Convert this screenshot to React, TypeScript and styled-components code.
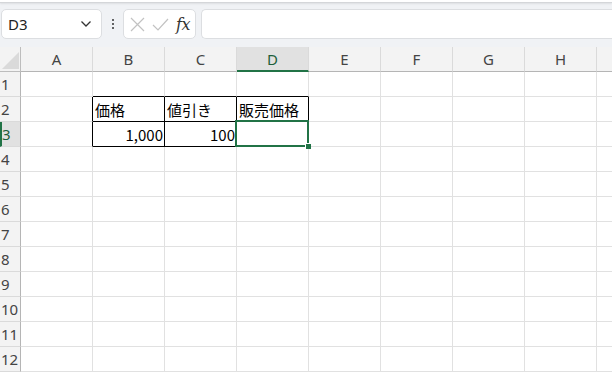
import styled, { createGlobalStyle, css } from "styled-components";

const GlobalStyle = createGlobalStyle`
  html, body {
    margin: 0;
    padding: 0;
    background: #ffffff;
    overflow: hidden;
  }
  body {
    font-family: "Noto Sans", "Noto Sans CJK JP", sans-serif;
  }
`;

const COLUMNS = ["A", "B", "C", "D", "E", "F", "G", "H", "I"];
const ROWS = 12;
const ACTIVE_COL = "D";
const ACTIVE_ROW = 3;

type CellData = { text: string; align?: "left" | "right" };

const DATA: Record<string, CellData> = {
  B2: { text: "価格" },
  C2: { text: "値引き" },
  D2: { text: "販売価格" },
  B3: { text: "1,000", align: "right" },
  C3: { text: "100", align: "right" },
};

// black ruled box B2:D3
const inBox = (c: number, r: number) => c >= 1 && c <= 3 && r >= 2 && r <= 3;

function App() {
  const cells = [];
  for (let r = 1; r <= ROWS; r++) {
    cells.push(
      <RowHeader key={`h${r}`} $active={r === ACTIVE_ROW}>
        {r}
      </RowHeader>
    );
    COLUMNS.forEach((col, c) => {
      const key = `${col}${r}`;
      const data = DATA[key];
      cells.push(
        <Cell
          key={key}
          $right={inBox(c, r) || inBox(c + 1, r)}
          $bottom={inBox(c, r) || inBox(c, r + 1)}
          $align={data?.align ?? "left"}
          $selected={col === ACTIVE_COL && r === ACTIVE_ROW}
        >
          {data?.text}
        </Cell>
      );
    });
  }

  return (
    <>
      <GlobalStyle />
      <Page>
        <Ribbon />
        <FormulaBar>
          <NameBox>
            <span>D3</span>
            <svg width="12" height="8" viewBox="0 0 12 8">
              <path d="M1.5 1.5 L6 6 L10.5 1.5" fill="none" stroke="#333" strokeWidth="1.3" />
            </svg>
          </NameBox>
          <Dots>
            <i />
            <i />
            <i />
          </Dots>
          <FxBox>
            <svg width="15" height="15" viewBox="0 0 15 15">
              <path d="M1 1 L14 14 M14 1 L1 14" stroke="#c2c2c2" strokeWidth="1.2" />
            </svg>
            <svg width="17" height="15" viewBox="0 0 17 15">
              <path d="M1 8 L6 13 L16 2" fill="none" stroke="#c2c2c2" strokeWidth="1.2" />
            </svg>
            <FxLabel>fx</FxLabel>
          </FxBox>
          <FormulaInput />
        </FormulaBar>
        <Sheet>
          <Corner>
            <svg width="17" height="17" viewBox="0 0 17 17">
              <path d="M17 0 L17 17 L0 17 Z" fill="#dadada" />
            </svg>
          </Corner>
          {COLUMNS.map((col) => (
            <ColHeader key={col} $active={col === ACTIVE_COL}>
              {col === "I" ? "" : col}
            </ColHeader>
          ))}
          {cells}
        </Sheet>
      </Page>
    </>
  );
}

const Page = styled.div`
  width: 612px;
  height: 374px;
  display: flex;
  flex-direction: column;
  background: #f0f2f5;
  overflow: hidden;
`;

const Ribbon = styled.div`
  height: 2px;
  background: #ffffff;
  border-bottom: 1px solid #d4d6d9;
  box-shadow: 0 1px 2px rgba(0, 0, 0, 0.08);
`;

const FormulaBar = styled.div`
  display: flex;
  align-items: center;
  height: 30px;
  padding: 6px 0 8px 1px;
`;

const Box = styled.div`
  height: 30px;
  box-sizing: border-box;
  background: #ffffff;
  border: 1px solid #dcdee1;
  border-radius: 5px;
  display: flex;
  align-items: center;
`;

const NameBox = styled(Box)`
  width: 101px;
  padding: 0 9px 0 6px;
  justify-content: space-between;
  font-family: "Noto Sans", sans-serif;
  font-size: 15px;
  color: #222;
`;

const Dots = styled.div`
  width: 21px;
  display: flex;
  flex-direction: column;
  align-items: center;
  gap: 2px;

  & > i {
    width: 2px;
    height: 2px;
    background: #333;
    border-radius: 1px;
  }
`;

const FxBox = styled(Box)`
  width: 73px;
  padding: 0 4px 0 6px;
  gap: 7px;
`;

const FxLabel = styled.span`
  font-family: "DejaVu Serif", "Liberation Serif", serif;
  font-style: italic;
  font-size: 16px;
  color: #333;
  letter-spacing: -0.5px;
`;

const FormulaInput = styled(Box)`
  flex: 1;
  margin-left: 5px;
  border-right: none;
  border-radius: 5px 0 0 5px;
`;

const Sheet = styled.div`
  flex: 1;
  display: grid;
  grid-template-columns: 21px repeat(9, 72px);
  grid-template-rows: 25px repeat(12, 25px);
  background: #ffffff;
  font-family: "Noto Sans CJK JP", "Noto Sans", sans-serif;
`;

const headerBase = css`
  box-sizing: border-box;
  background: #f3f3f3;
  color: #444;
  font-family: "Noto Sans", sans-serif;
  font-size: 15px;
  display: flex;
  align-items: center;
`;

const Corner = styled.div`
  ${headerBase};
  border-right: 1px solid #bdbdbd;
  border-bottom: 1px solid #bdbdbd;
  align-items: flex-end;
  justify-content: flex-end;
  padding: 0 1px 2px 0;
`;

const ColHeader = styled.div<{ $active: boolean }>`
  ${headerBase};
  justify-content: center;
  border-right: 1px solid #dadada;
  border-bottom: 1px solid #b5b5b5;
  ${({ $active }) =>
    $active &&
    css`
      background: #e1e1e1;
      color: #1e5e3a;
      border-bottom: 2px solid #217346;
    `}
`;

const RowHeader = styled.div<{ $active: boolean }>`
  ${headerBase};
  justify-content: flex-start;
  padding-left: 1px;
  border-right: 1px solid #b5b5b5;
  border-bottom: 1px solid #dadada;
  ${({ $active }) =>
    $active &&
    css`
      background: #e1e1e1;
      color: #1e5e3a;
      border-left: 2px solid #217346;
      padding-left: 0;
    `}
`;

const Cell = styled.div<{
  $right: boolean;
  $bottom: boolean;
  $align: "left" | "right";
  $selected: boolean;
}>`
  position: relative;
  box-sizing: border-box;
  border-right: 1px solid ${({ $right }) => ($right ? "#000" : "#e1e1e1")};
  border-bottom: 1px solid ${({ $bottom }) => ($bottom ? "#000" : "#e1e1e1")};
  display: flex;
  align-items: flex-end;
  justify-content: ${({ $align }) => ($align === "right" ? "flex-end" : "flex-start")};
  padding: 0 1px 1px 2px;
  font-size: 15px;
  line-height: 20px;
  color: #000;
  white-space: nowrap;

  ${({ $selected }) =>
    $selected &&
    css`
      z-index: 1;
      &::before {
        content: "";
        position: absolute;
        left: -2px;
        top: -2px;
        right: -1px;
        bottom: -1px;
        border: 2px solid #217346;
      }
      &::after {
        content: "";
        position: absolute;
        right: -3px;
        bottom: -3px;
        width: 5px;
        height: 5px;
        background: #217346;
        border: 1px solid #ffffff;
        border-width: 1px 0 0 1px;
      }
    `}
`;

export default App;
